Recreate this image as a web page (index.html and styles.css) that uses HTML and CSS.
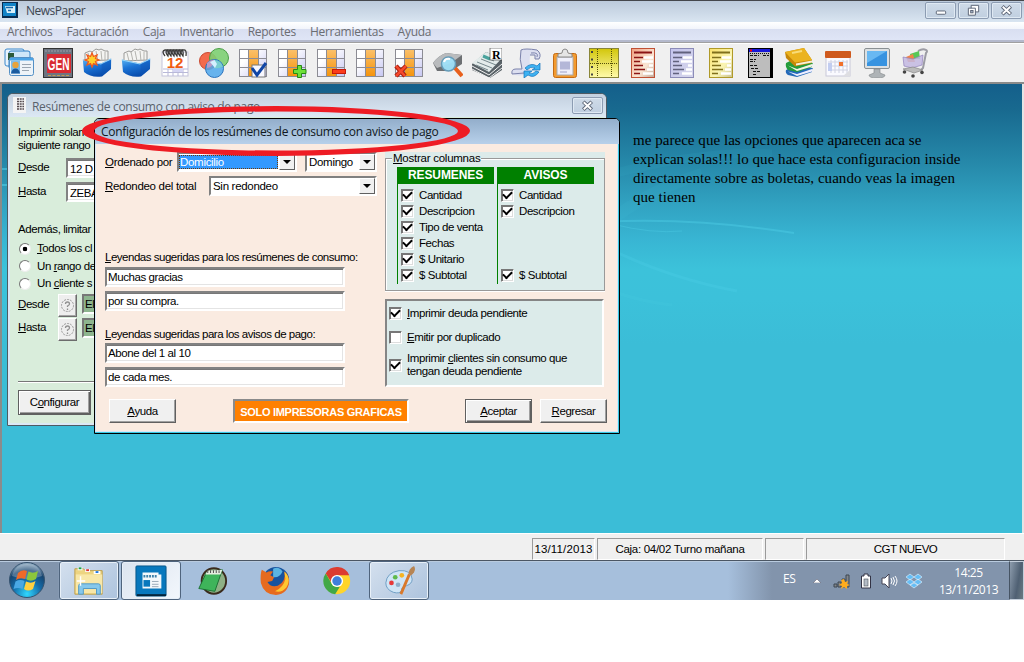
FILE: index.html
```html
<!DOCTYPE html>
<html lang="es">
<head>
<meta charset="utf-8">
<title>NewsPaper</title>
<link rel="stylesheet" href="styles.css">
</head>
<body>
<svg class="defs" width="0" height="0" aria-hidden="true">
  <defs>
    <linearGradient id="blue" x1="0" y1="0" x2=".4" y2="1"><stop offset="0" stop-color="#5fb8f4"/><stop offset=".5" stop-color="#1c74d6"/><stop offset="1" stop-color="#0a4eae"/></linearGradient>
    <linearGradient id="orange" x1="0" y1="0" x2="0" y2="1"><stop offset="0" stop-color="#fbc069"/><stop offset="1" stop-color="#f5940e"/></linearGradient>
    <linearGradient id="lilac" x1="0" y1="0" x2="1" y2="1"><stop offset=".3" stop-color="#fff"/><stop offset="1" stop-color="#c6c6f2"/></linearGradient>
    <linearGradient id="yellow" x1="0" y1="0" x2="0" y2="1"><stop offset="0" stop-color="#d2c60a"/><stop offset="1" stop-color="#fffbaa"/></linearGradient>
    <linearGradient id="docred" x1="0" y1="0" x2="1" y2="1"><stop offset="0" stop-color="#f0a080"/><stop offset=".6" stop-color="#fbe6d4"/><stop offset="1" stop-color="#c0a898"/></linearGradient>
    <linearGradient id="doclilac" x1="0" y1="0" x2="1" y2="1"><stop offset="0" stop-color="#c4c4ee"/><stop offset="1" stop-color="#d6d6ea"/></linearGradient>
    <linearGradient id="docyellow" x1="0" y1="0" x2="1" y2="1"><stop offset="0" stop-color="#fbe26a"/><stop offset=".6" stop-color="#faf5b4"/><stop offset="1" stop-color="#c8c090"/></linearGradient>
    <radialGradient id="orb" cx=".5" cy=".9" r=".9"><stop offset="0" stop-color="#30d8ff"/><stop offset=".45" stop-color="#146ba8"/><stop offset=".75" stop-color="#17446f"/><stop offset="1" stop-color="#9fb8cc"/></radialGradient>
    <symbol id="table" viewBox="0 0 30 30">
      <rect x="1.500" y="1.500" width="27" height="27" fill="url(#lilac)" stroke="#8c8c94"/>
      <rect x="11" y="2" width="9" height="26" fill="url(#orange)"/>
      <path d="M2 10.500H28M2 19.500H28M10.500 2V28M20.500 2V28" stroke="#8c8c94" fill="none"/>
    </symbol>
    <symbol id="filebox" viewBox="0 0 30 30">
      <path d="M3 13V5L8 3 10 4 14 1 17 2 19 1 23 3 26 3V12Z" fill="#f4f4f2" stroke="#9a9a98"/>
      <path d="M6 5 8 13M10 4 12 13M14 3 16 13M19 3 20 13M23 4V12" stroke="#b4b4b0" fill="none"/>
      <path d="M.8 11.500 19 15.500 29.200 10.500 29 21 20 28.500Q9 30 2 24Z" fill="url(#blue)"/>
      <path d="M1 12 19 16 29 11" stroke="#9ad8fb" fill="none"/>
      <path d="M19.500 16 20 28 28.500 21 29 12Z" fill="#0d55b4" opacity=".45"/>
    </symbol>
    <symbol id="doclines" viewBox="0 0 30 30">
      <path d="M6 4.500H24" stroke-width="2" stroke="currentColor"/>
      <path d="M6 9.500H15M6 13.500H12M6 17.500H15M6 21.500H17M6 25.500H12" stroke-width="1.300" stroke="currentColor"/>
      <path d="M16 9.500H25M14 13.500H25M21 17.500H25M19 21.500H25M15 25.500H25" stroke-width="2.400" stroke="#fff"/>
    </symbol>
  </defs>
</svg>

<div class="screen">
  <header class="titlebar">
    <svg class="app-icon" viewBox="0 0 16 16"><rect width="16" height="16" fill="#082c50"/><rect x="1" y="1" width="13" height="13" fill="#1284c8"/><path d="M3 4H13V11H5Z" fill="#d8f0fb"/><path d="M4 5.500H11M6 8.500H9" stroke="#1567a8" stroke-width="1.500"/></svg>
    <span class="titlebar-text">NewsPaper</span>
    <div class="win-buttons">
      <span class="win-btn"><svg viewBox="0 0 30 16"><rect x="10.500" y="8.500" width="10" height="3.500" rx="1" fill="#fff" stroke="#596273"/></svg></span>
      <span class="win-btn"><svg viewBox="0 0 30 16"><path d="M12.500 2.500H20.500V9.500H12.500Z" fill="#fff" stroke="#596273"/><path d="M9.500 5.500H17V13H9.500Z" fill="#fff" stroke="#596273"/><rect x="12" y="8" width="2.500" height="2.500" fill="#aab8cc" stroke="#596273"/></svg></span>
      <span class="win-btn"><svg viewBox="0 0 30 16"><path d="M10.500 3.500 19.500 12M19.500 3.500 10.500 12" stroke="#596273" stroke-width="4"/><path d="M11 4 19 11.500M19 4 11 11.500" stroke="#fff" stroke-width="2"/></svg></span>
    </div>
  </header>

  <nav class="menubar">
    <span>Archivos</span><span>Facturación</span><span>Caja</span><span>Inventario</span><span>Reportes</span><span>Herramientas</span><span>Ayuda</span>
  </nav>

  <div class="toolbar">
    <svg viewBox="0 0 30 30"><rect x="1" y="1" width="19" height="17" rx="2" fill="#e9f3fc" stroke="#3b88cc"/><rect x="5" y="3" width="21" height="18" rx="2" fill="#cfe7f9" stroke="#2d7fc6"/><rect x="4" y="5" width="6" height="7" fill="#2c5a3a"/><rect x="5.500" y="9.500" width="24" height="18" rx="2" fill="#eef3f8" stroke="#5590c5"/><path d="M6 10H29V12.500H6Z" fill="#4aa3e6"/><rect x="7" y="12.500" width="9" height="13" fill="#7fbdec"/><circle cx="11.500" cy="17" r="3.200" fill="#e8a33c"/><path d="M7 25.500Q8 20.500 11.500 20.500T16 25.500Z" fill="#1c5b9e"/><path d="M18 16.500H27M18 19.500H27M18 22.500H25" stroke="#9aa5b1"/></svg>
    <svg viewBox="0 0 30 30"><rect x=".5" y=".5" width="29" height="29" fill="#6e7480" stroke="#333"/><rect x="4" y="6" width="24" height="19" fill="#d92b32"/><path d="M2 3H28" stroke="#9aa0aa" stroke-dasharray="2 1"/><path d="M5 27.500H26" stroke="#c09a50" stroke-dasharray="3 1.500"/><text x="15.500" y="21.500" class="gen" textLength="22" lengthAdjust="spacingAndGlyphs">GEN</text></svg>
    <svg viewBox="0 0 30 30"><use href="#filebox"/><path d="M10 5 11.500 8.500 15 7 13.500 10.500 17 12 13.500 13.500 15 17 11.500 15.500 10 19 8.500 15.500 5 17 6.500 13.500 3 12 6.500 10.500 5 7 8.500 8.500Z" fill="#ffd02c" stroke="#f0581c" stroke-width="1.300"/></svg>
    <svg viewBox="0 0 30 30"><use href="#filebox"/></svg>
    <svg viewBox="0 0 30 30"><rect x="2" y="4" width="26" height="24" fill="#fff" stroke="#c3c3da"/><path d="M3 21H28M3 24.500H28M8 21V28M13 21V28M18 21V28M23 21V28" stroke="#b9b9d8"/><path d="M13 21H23V24H13Z" fill="#d5d5f3"/><path d="M5 8Q1 3 5 2T8 8Q4 3 8 2T11 8Q7 3 11 2T14 8Q10 3 14 2T17 8Q13 3 17 2T20 8Q16 3 20 2T23 8Q19 3 23 2T26 8" stroke="#3c3c3c" fill="none" stroke-width="1.300"/><text x="15" y="20" class="cal">12</text></svg>
    <svg viewBox="0 0 30 30"><circle cx="9" cy="13" r="8.500" fill="#f36a4c" stroke="#c94b33"/><circle cx="20" cy="10" r="9.500" fill="#7dcf72" fill-opacity=".9" stroke="#4a9e47"/><circle cx="15.500" cy="20.500" r="9" fill="#4fa8ec" fill-opacity=".85" stroke="#2c74bd"/><path d="M8 15Q12 11 16 12Q14 19 8 20Z" fill="#b89ac6"/><path d="M15 12Q22 12 24 19Q18 21 15 20Z" fill="#78cdd0"/><path d="M11 14 15.500 12 18 16 16 20Z" fill="#d4f0ff"/></svg>
    <svg viewBox="0 0 30 30"><use href="#table"/><rect x="14" y="17" width="13" height="12" fill="#f8f8ff" stroke="#777"/><path d="M14 20 19 27 28 15" fill="none" stroke="#1045a5" stroke-width="3"/></svg>
    <svg viewBox="0 0 30 30"><use href="#table"/><path d="M20.500 17.500H24.500V21.500H29V25.500H24.500V29.500H20.500V25.500H16.500V21.500H20.500Z" fill="#6ee038" stroke="#258a15"/></svg>
    <svg viewBox="0 0 30 30"><use href="#table"/><rect x="16.500" y="21.500" width="13" height="4" fill="#fb3c1a" stroke="#c41a0c"/></svg>
    <svg viewBox="0 0 30 30"><use href="#table"/></svg>
    <svg viewBox="0 0 30 30"><use href="#table"/><path d="M2 18 11 28M12 18 2 28" stroke="#a81d0c" stroke-width="4.500"/><path d="M2 18 11 28M12 18 2 28" stroke="#f5492c" stroke-width="2.500"/></svg>
    <svg viewBox="0 0 30 30"><path d="M0 15Q5 8 13 5L29 7V16L18 23H4Z" fill="#6d7073"/><path d="M0 15Q5 8 13 5L29 7 18 15 4 20Z" fill="#b9bbbd"/><path d="M22 20 29 28" stroke="#e8601c" stroke-width="4"/><circle cx="15.500" cy="16" r="7" fill="#9fe0f8" fill-opacity=".95" stroke="#659bb8" stroke-width="1.500"/><path d="M11 14Q12 10 17 11" stroke="#fff" stroke-width="2" fill="none"/></svg>
    <svg viewBox="0 0 30 30"><path d="M0 16 14 4 30 10V22L18 30 0 22Z" fill="#596267"/><path d="M0 15 14 4 30 10 17 24Z" fill="#e4eceb"/><path d="M0 18 17 27 30 16M0 21 17 30 30 20" stroke="#f2f2f2" fill="none"/><path d="M5 14 20 20M9 11 24 17M4 17 16 22M13 9 22 13" stroke="#77898d"/><path d="M11 8 18 11" stroke="#49a29c" stroke-width="3"/><rect x="18" y="0" width="12" height="12" fill="#fff" stroke="#333" stroke-width=".6"/><text x="24" y="10.500" class="letter-r">R</text></svg>
    <svg viewBox="0 0 30 30"><path d="M10 2Q14 0 26 2Q31 6 28 11H24V7H19Q18 16 20 23Q10 30 1 26Q0 21 5 21H11Q8 11 10 2Z" fill="#dcdff0"/><path d="M10 2Q14 0 26 2Q31 6 28 11H24V7H19M10 2Q8 11 11 21H5Q0 21 1 26L13 25M20 5Q28 4 26 9" fill="none" stroke="#7b82ab"/><path d="M14 20Q20 14 26 18L29 15V22H21L24 20Q19 18 16 22ZM28 24Q23 31 17 27L13 30V23H21L18 25Q22 27 25 23Z" fill="#3db2f2" stroke="#1374bc" stroke-width=".7"/></svg>
    <svg viewBox="0 0 30 30"><rect x="3.500" y="5.500" width="23" height="24" rx="2" fill="#f39b30" stroke="#c46b14"/><rect x="7" y="9" width="16" height="18" fill="#eff0fb" stroke="#aaa"/><path d="M10 13.500H20V21.500H10Z" fill="#b4b7d8"/><path d="M10 24H17" stroke="#9ea2c8"/><path d="M8 9V6L12 5Q12 1 15 1T18 5L22 6V9Z" fill="#e5e5e5" stroke="#8a8a8a"/></svg>
    <svg viewBox="0 0 30 30"><rect x=".5" y=".5" width="29" height="29" fill="url(#yellow)" stroke="#8a8638"/><path d="M8.500 1V29M22.500 1V29M1 15.500H29" stroke="#544f08" stroke-dasharray="1 1"/><path d="M3 3V28" stroke="#444" stroke-width="2" stroke-dasharray="2 5.500"/></svg>
    <svg class="ink-red" viewBox="0 0 30 30"><rect x="3.500" y=".5" width="23" height="29" fill="url(#docred)" stroke="#c05034"/><use href="#doclines"/></svg>
    <svg class="ink-lilac" viewBox="0 0 30 30"><rect x="3.500" y=".5" width="23" height="29" fill="url(#doclilac)" stroke="#8c8cb8"/><use href="#doclines"/></svg>
    <svg class="ink-yellow" viewBox="0 0 30 30"><rect x="3.500" y=".5" width="23" height="29" fill="url(#docyellow)" stroke="#b09a28"/><use href="#doclines"/></svg>
    <svg viewBox="0 0 30 30"><rect x="3" y="0" width="25" height="30" fill="#000"/><rect x="4" y="4" width="21" height="25" fill="#bdbdbd"/><rect x="4" y="1" width="21" height="3" fill="#1717d8"/><path d="M5 2.500H7" stroke="#f00" stroke-width="2"/><path d="M5 5.500H24" stroke="#111" stroke-dasharray="1 1"/><path d="M5 7.500H14M18 7.500H24M5 11.500H11M5 13.500H10M5 17.500H12M6 20.500H14M8 23.500H16M8 26.500H12" stroke="#111" stroke-dasharray="3 1"/></svg>
    <svg viewBox="0 0 30 30"><path d="M2 22 8 19 29 20Q27 22 28 24L13 29 4 27Q1 25 2 22Z" fill="#2369b8"/><path d="M4 23.500 13 26 28 21V23.500L13 28Z" fill="#eef"/><path d="M2 15 8 12 29 15Q27 17 28 19L13 24 4 22Q1 19 2 15Z" fill="#239c3b"/><path d="M4 17.500 13 21 28 16V18.500L13 23Z" fill="#f2f2e4"/><path d="M1 4 20 0 28 12V15L11 18.500 2 10Z" fill="#c68708"/><path d="M1 4 20 0 28 12 11 14.500Z" fill="#ebb31f"/><path d="M8 5 18 3" stroke="#f9dc78" stroke-width="2"/><path d="M12 15.500 28 12.500V14.500L12 17.500Z" fill="#f5f0da"/></svg>
    <svg viewBox="0 0 30 30"><rect x="3" y="8" width="24" height="20" fill="#fafaff" stroke="#c8c8d8"/><rect x="2" y="3" width="26" height="7" rx="1" fill="#cf5a1e"/><path d="M5 14H25M5 18H25M5 22H25M8 12V25M12 12V25M16 12V25M20 12V25M24 12V25" stroke="#d0d2e2"/><rect x="5" y="15" width="4" height="8" fill="#c2cdf0"/><rect x="16" y="14" width="4" height="4" fill="#f1702b"/><path d="M20 28 27 22V28Z" fill="#dedee2"/></svg>
    <svg viewBox="0 0 30 30"><rect x="2.500" y=".5" width="25" height="20" rx="1.500" fill="#dce0e2" stroke="#8a9093"/><rect x="5" y="3" width="20" height="15" fill="#3793e0"/><path d="M5 3H25L5 15Z" fill="#68b8f2"/><path d="M12 21H18V25L23 27Q23 30 15 30T7 27L12 25Z" fill="#aeb3b6" stroke="#7f8587" stroke-width=".6"/></svg>
    <svg viewBox="0 0 30 30"><path d="M17 3Q22 0 25 2 27 3 25 5L22 20 19 23" fill="none" stroke="#9c9ca4" stroke-width="2"/><path d="M9 6 18 3 19 11H10Z" fill="#57c857"/><path d="M5 9 12 6 14 14H7Z" fill="#f18448"/><path d="M2 9 12 11 22 7 21 17 11 20 3 18Z" fill="#c3b8e2" fill-opacity=".85" stroke="#9283bd" stroke-width=".7"/><path d="M2 21 12 19 22 22 13 25Z" fill="#bbb" stroke="#888" stroke-width=".7"/><circle cx="3.500" cy="24" r="1.800" fill="#444"/><circle cx="12" cy="28" r="1.800" fill="#444"/><circle cx="21" cy="24.500" r="1.800" fill="#444"/></svg>
  </div>

  <main class="desktop">
    <svg class="streaks" viewBox="0 0 1020 449"><g fill="none" stroke="#55d8ee"><path d="M600 138Q690 133 792 149" stroke-width="2" opacity=".35"/><path d="M610 140Q650 150 680 147" opacity=".3"/><path d="M610 166Q670 195 735 207" stroke-width="3" opacity=".2"/><path d="M610 90Q700 66 770 70" stroke-width="9" opacity=".06"/><path d="M612 134Q650 105 700 90" stroke-width="12" opacity=".06"/><path d="M610 207Q640 218 670 221" stroke-width="3" opacity=".1"/><path d="M0 85H6M0 101H6" stroke-width="2" opacity=".5"/></g></svg>

    <p class="note">me parece que las opciones que aparecen aca se<br>explican solas!!! lo que hace esta configuracion inside<br>directamente sobre as boletas, cuando veas la imagen<br>que tienen</p>

    <section class="window back-window">
      <div class="window-title">
        <svg class="doc-icon" viewBox="0 0 14 16"><rect width="13" height="16" fill="#f4f4f4"/><path d="M4 2H11M4 4.500H11M4 7H11M4 9.500H11M4 12H11" stroke="#554b50" stroke-width="1.400" stroke-dasharray="2 .7"/></svg>
        <span>Resúmenes de consumo con aviso de pago</span>
        <span class="win-btn small"><svg viewBox="0 0 30 16"><path d="M10.500 4 19.500 12.500M19.500 4 10.500 12.500" stroke="#596273" stroke-width="4"/><path d="M11 4.500 19 12M19 4.500 11 12" stroke="#fff" stroke-width="2"/></svg></span>
      </div>
      <div class="back-body">
        <p class="intro">Imprimir solam<br>siguiente rango</p>
        <div class="range"><label><u>D</u>esde</label><span class="field">12 D</span></div>
        <div class="range"><label><u>H</u>asta</label><span class="field">ZEBA</span></div>
        <p class="limit">Además, limitar l</p>
        <div class="radio"><i class="dot on"></i><span><u>T</u>odos los cl</span></div>
        <div class="radio"><i class="dot"></i><span>Un <u>r</u>ango de</span></div>
        <div class="radio"><i class="dot"></i><span>Un <u>c</u>liente s</span></div>
        <div class="pick"><label><u>D</u>esde</label><span class="help"><svg viewBox="0 0 15 15"><circle cx="7.500" cy="7.500" r="6" fill="none" stroke="#999" stroke-dasharray="2 1"/><path d="M5.500 6Q5.500 4 7.500 4T9.500 6Q9.500 7 7.500 8V9M7.500 10.500V12" fill="none" stroke="#909090" stroke-width="1.300"/></svg></span><span class="green-field">El</span></div>
        <div class="pick"><label><u>H</u>asta</label><span class="help"><svg viewBox="0 0 15 15"><circle cx="7.500" cy="7.500" r="6" fill="none" stroke="#999" stroke-dasharray="2 1"/><path d="M5.500 6Q5.500 4 7.500 4T9.500 6Q9.500 7 7.500 8V9M7.500 10.500V12" fill="none" stroke="#909090" stroke-width="1.300"/></svg></span><span class="green-field">El</span></div>
        <div class="divider"></div>
        <span class="button default configure">C<u>o</u>nfigurar</span>
      </div>
    </section>

    <section class="window front-window">
      <div class="window-title"><span>Configuración de los resúmenes de consumo con aviso de pago</span></div>
      <div class="front-body">
        <div class="columns">
          <div class="left-col">
            <div class="order-row"><label><u>O</u>rdenado por</label>
              <span class="select order"><span class="selected">Domicilio</span><i class="arrow"></i></span>
              <span class="select day"><span>Domingo</span><i class="arrow"></i></span></div>
            <div class="round-row"><label><u>R</u>edondeo del total</label><span class="select round"><span>Sin redondeo</span><i class="arrow"></i></span></div>
            <p class="legend"><u>L</u>eyendas sugeridas para los resúmenes de consumo:</p>
            <span class="field">Muchas gracias</span>
            <span class="field">por su compra.</span>
            <p class="legend second"><u>L</u>eyendas sugeridas para los avisos de pago:</p>
            <span class="field">Abone del 1 al 10</span>
            <span class="field">de cada mes.</span>
          </div>
          <div class="right-col">
            <div class="group">
              <div class="group-title"><span><u>M</u>ostrar columnas</span></div>
              <div class="lists">
                <div class="list"><h3>RESUMENES</h3>
                  <div class="check"><i class="box on"></i>Cantidad</div>
                  <div class="check"><i class="box on"></i>Descripcion</div>
                  <div class="check"><i class="box on"></i>Tipo de venta</div>
                  <div class="check"><i class="box on"></i>Fechas</div>
                  <div class="check"><i class="box on"></i>$ Unitario</div>
                  <div class="check"><i class="box on"></i>$ Subtotal</div>
                </div>
                <div class="list"><h3>AVISOS</h3>
                  <div class="check"><i class="box on"></i>Cantidad</div>
                  <div class="check"><i class="box on"></i>Descripcion</div>
                  <div class="check last"><i class="box on"></i>$ Subtotal</div>
                </div>
              </div>
            </div>
            <div class="options">
              <div class="check"><i class="box on"></i><span><u>I</u>mprimir deuda pendiente</span></div>
              <div class="check"><i class="box"></i><span><u>E</u>mitir por duplicado</span></div>
              <div class="check tall"><i class="box on"></i><span>Imprimir <u>c</u>lientes sin consumo que<br>tengan deuda pendiente</span></div>
            </div>
          </div>
        </div>
        <div class="actions">
          <span class="button"><u>A</u>yuda</span>
          <span class="banner">SOLO IMPRESORAS GRAFICAS</span>
          <span class="button default"><u>A</u>ceptar</span>
          <span class="button"><u>R</u>egresar</span>
        </div>
      </div>
    </section>

    <svg class="marker" viewBox="0 0 388 50"><path fill="#ee1c24" fill-rule="evenodd" d="M0 25A194 25 0 0 1 388 25A194 25 0 0 1 0 25ZM12 25A182 19.500 0 0 0 376 25A182 19.500 0 0 0 12 25Z"/></svg>
  </main>

  <div class="statusbar">
    <span class="cell date">13/11/2013</span><span class="cell turn">Caja: 04/02 Turno mañana</span><span class="cell blank"></span><span class="cell user">CGT NUEVO</span>
  </div>

  <footer class="taskbar">
    <svg class="start" viewBox="0 0 38 38"><circle cx="19" cy="19" r="17.500" fill="url(#orb)" stroke="#36536f"/><path d="M4 15Q7 3 19 3T34 15Q19 21 4 15Z" fill="#fff" opacity=".25"/><path d="M10 12Q14 8 19 10L17 18Q12 16 8 19Z" fill="#f06a28"/><path d="M20.500 10.500Q25 13 30 10L28 18Q23 21 18.500 18.500Z" fill="#8cc63c"/><path d="M7.500 20.500Q12 18 16.500 20L14.500 28Q10 26 5.500 28Z" fill="#4aa8e4"/><path d="M18 20.500Q23 23 27.500 20L25 28Q20 31 16 28Z" fill="#ffd040"/></svg>
    <span class="task running explorer"><svg viewBox="0 0 34 34"><path d="M2 4H11L13 6H31V31H2Z" fill="#edd481" stroke="#bd9d48"/><path d="M5 4H10M13 6H18M22 8H29" stroke="#fff" stroke-width="3"/><path d="M6 3.500H9" stroke="#19a04a" stroke-width="2"/><path d="M14 5.500H17" stroke="#d33" stroke-width="2"/><path d="M24 7.500H27" stroke="#27d" stroke-width="2"/><path d="M3 10H31V30H3Z" fill="#f8e7a8"/><path d="M6 22Q6 20 8 20H27Q29 20 29 22V31H25V25H11V31H6Z" fill="#86c8ec" stroke="#4f98c5"/><path d="M8 12V22M4 17H13" stroke="#fff" stroke-width="1.500"/></svg></span>
    <span class="task running active news"><svg viewBox="0 0 34 34"><rect x="1" y="1" width="32" height="32" rx="1" fill="#0878bd" stroke="#075587"/><path d="M2 32H33" stroke="#04243a" stroke-width="2"/><path d="M8 8H25V10H28V25H8Z" fill="#f4f8fb"/><path d="M9 12H24" stroke="#3f82aa" stroke-width="2.500" stroke-dasharray="2 1"/><rect x="9" y="16" width="7" height="7" fill="#0878bd"/><path d="M18 17.500H25M18 20.500H25M18 23H25" stroke="#96a7b5"/></svg></span>
    <span class="task pad"><svg viewBox="0 0 34 34"><ellipse cx="19" cy="17" rx="13" ry="13.500" fill="#8eb085" stroke="#3a2a1c" stroke-width="2"/><path d="M11 8 28 5 20 28 3 25Z" fill="#3eb45a" stroke="#1a6f33"/><path d="M12 6 28 5 26 10 10 10Z" fill="#e5eee0"/><path d="M12 7H27" stroke="#444" stroke-width="3" stroke-dasharray="1 2"/></svg></span>
    <span class="task fox"><svg viewBox="0 0 34 34"><circle cx="18" cy="16" r="14" fill="#17529e"/><path d="M15 4Q21 1 25 7Q22 14 15 13Z" fill="#5bb4e2"/><path d="M3 5 8 8Q11 6 15 7L12 11 16 13 14 17 9 18Q12 24 20 22Q29 18 27 7Q32 11 32 18Q31 30 18 32Q5 31 2 19Q1 10 3 5Z" fill="#e66b1f"/><path d="M27 7Q35 15 29 24Q24 30 17 28Q26 24 28 15Z" fill="#ffc831"/></svg></span>
    <span class="task chrome"><svg viewBox="0 0 34 34"><circle cx="17" cy="17" r="14" fill="#ffd52a"/><path d="M5 9A14 14 0 0 1 30 11H17Q9 13 12 20Z" fill="#dc3c30"/><path d="M5 9 12 21Q15 24 20 23L15 31A14 14 0 0 1 5 9Z" fill="#41a847"/><circle cx="17" cy="17" r="6.500" fill="#fff"/><circle cx="17" cy="17" r="5" fill="#3f7fdb"/></svg></span>
    <span class="task running paint"><svg viewBox="0 0 34 34"><path d="M3 19Q4 8 17 6Q30 5 31 15Q31 20 25 22Q19 23 20 27Q18 31 11 29Q3 26 3 19Z" fill="#cfe5f6" stroke="#6b9bc1"/><circle cx="9" cy="19" r="2.500" fill="#e63a3a"/><circle cx="13" cy="13" r="2.500" fill="#5fba4c"/><circle cx="20" cy="11" r="2.500" fill="#f5b321"/><circle cx="16" cy="21" r="2.500" fill="#8db0cc"/><path d="M19 31 28 10" stroke="#d9792c" stroke-width="3"/><path d="M27 10Q27 4 33 1Q36 6 30 11Z" fill="#b78554"/></svg></span>
    <div class="tray">
      <span class="lang">ES</span>
      <svg class="up" viewBox="0 0 8 4"><path d="M0 4 4 0 8 4Z" fill="#fff" stroke="#556" stroke-width=".5"/></svg>
      <svg class="signal" viewBox="0 0 18 16"><path d="M1 11H4V14H1ZM5 9H8V14H5ZM9 6H12V14H9ZM13 2H16V14H13Z" fill="#83878c" stroke="#3d4650"/><path d="M11 6 12 9 15 8 14 11 17 12 14 13 14 16 11 14 8 16 9 13 6 12 9 10 8 7Z" fill="#ffac1c"/></svg>
      <svg class="battery" viewBox="0 0 12 16"><path d="M4 1H8V3H10.500V15H1.500V3H4Z" fill="#fff" stroke="#334"/><rect x="4" y="6" width="4" height="7" fill="#b4bcc6" stroke="#4d545c" stroke-width=".6"/></svg>
      <svg class="sound" viewBox="0 0 17 16"><path d="M1 5H4L8 1V15L4 11H1Z" fill="#fff" stroke="#445"/><path d="M10 5Q12 8 10 11M12 4Q15 8 12 12M14 3Q18 8 14 13" fill="none" stroke="#fff"/></svg>
      <svg class="dropbox" viewBox="0 0 18 16"><path d="M5 1 9 4 5 7 1 4ZM13 1 17 4 13 7 9 4ZM5 6 9 9 5 12 1 9ZM13 6 17 9 13 12 9 9ZM5 12 9 10 13 12 9 15Z" fill="#65bdf5" stroke="#d5edfc" stroke-width=".7"/></svg>
      <span class="clock">14:25<br>13/11/2013</span>
      <span class="peek"></span>
    </div>
  </footer>
</div>
</body>
</html>
```

FILE: styles.css
```css
* { box-sizing: border-box; }
body { margin: 0; background: #fff; color: #000; font: 11.5px/13px "Liberation Sans", Arial, sans-serif; letter-spacing: -.42px; }
p, h3 { margin: 0; }
i { font-style: normal; }
svg { display: block; flex: none; }
u { text-underline-offset: 1px; text-decoration-thickness: 1px; }
.defs { position: absolute; }
.screen { width: 1024px; height: 600px; display: flex; flex-direction: column; overflow: hidden; }

.titlebar { height: 22px; flex: none; display: flex; padding-left: 2px; border-top: 1px solid #45474c; background: linear-gradient(#bccadb, #d9e5f1); font: 12px/20px "Open Sans", "Noto Sans", sans-serif; color: #3d4650; letter-spacing: -.5px; }
.app-icon { width: 16px; height: 16px; margin-top: 1px; }
.titlebar-text { margin-left: 8px; flex: 1; }
.win-buttons { display: flex; gap: 2px; padding: 1px 2px 0 0; }
.win-btn { width: 31px; height: 17px; border: 1px solid #8c9cb2; border-radius: 2px; background: linear-gradient(#cfdbe8, #c0cfe0); box-shadow: inset 0 0 0 1px #dfe9f3; }
.win-btn svg { width: 29px; height: 15px; }

.menubar { height: 20px; flex: none; display: flex; gap: 14px; padding-left: 7px; background: linear-gradient(#fff 0, #f2f5fb 7px, #d9dff1 7px, #dfe5f6 18px, #b4b9cc 18px); font: 12px/20px "Open Sans", "Noto Sans", sans-serif; color: #6b6d72; letter-spacing: -.27px; }
.toolbar { height: 42px; flex: none; display: flex; gap: 9px; padding: 5px 0 0 4px; background: #f0f0f0; border-top: 1px solid #a0a0a0; border-bottom: 2px solid #8a8a8a; box-shadow: inset 0 1px #fff; }
.toolbar svg { width: 30px; height: 30px; }
.gen { font: bold 17px "Liberation Sans", sans-serif; fill: #fff; text-anchor: middle; letter-spacing: 0; }
.cal { font: bold 15px "Liberation Sans", sans-serif; fill: #f05a12; text-anchor: middle; letter-spacing: 0; }
.letter-r { font: bold 12px "Liberation Serif", serif; text-anchor: middle; }
.ink-red { color: #8c1414; }
.ink-lilac { color: #62627e; }
.ink-yellow { color: #80701c; }

.desktop { height: 449px; flex: none; position: relative; border-left: 2px solid #8b8b8b; border-right: 2px solid #e4e4e4; background: linear-gradient(#145f8b 0, #18698f 25px, #2587a8 76px, #31a2c1 120px, #38b5d3 155px, #3cc2da 185px, #3cc1da 215px, #3bbdd7 260px); }
.streaks { width: 1020px; height: 449px; }
.note { position: absolute; left: 631px; top: 47px; font: 15px/19px "Liberation Serif", "Times New Roman", serif; letter-spacing: .04px; white-space: nowrap; }

.window { position: absolute; display: flex; flex-direction: column; overflow: hidden; white-space: nowrap; }
.window-title { display: flex; flex: none; font: 12px/25px "Open Sans", "Noto Sans", sans-serif; letter-spacing: -.59px; }
.back-window { left: 5px; top: 9px; width: 600px; height: 333px; border: 1px solid #4e5a63; border-radius: 6px 6px 0 0; background: #dbe9f5; padding: 0 2px 2px; }
.back-window .window-title { height: 23px; margin: 0 -2px; padding: 0 3px 0 5px; background: linear-gradient(#c3d0df, #dce8f4); color: #59626c; letter-spacing: -.32px; }
.front-window .window-title { letter-spacing: -.3px; }
.doc-icon { width: 14px; height: 16px; margin: 3px 5px 0 0; }
.win-btn.small { margin: 3px 0 0 auto; height: 17px; width: 31px; }
.back-body { flex: 1; background: #d9eddb; padding: 8px 0 0 8px; display: flex; flex-direction: column; }
.intro { height: 33px; padding-top: 1px; line-height: 13px; }
.range { display: flex; height: 24px; }
.range label { width: 48px; padding-top: 3px; }
.field { display: block; background: #fff; border: 2px solid; border-color: #828282 #fff #fff #828282; box-shadow: inset 0 1px #777, inset -1px -1px #e4e4e4; height: 20px; line-height: 16px; padding-left: 1px; }
.range .field { width: 200px; line-height: 18px; padding-left: 2px; }
.limit { height: 17px; margin-top: 17px; }
.radio { height: 17.500px; display: flex; align-items: center; gap: 6px; padding-left: 1px; }
.dot { width: 12px; height: 12px; border-radius: 50%; border: 1px solid #777; border-right-color: #eee; border-bottom-color: #eee; background: #fff; }
.dot.on { background: radial-gradient(circle, #000 2px, #fff 2.600px); }
.pick { display: flex; height: 24px; margin-top: 1px; }
.pick + .pick { margin-top: 0; }
.pick label { width: 40px; padding-top: 4px; }
.pick + .pick label { padding-top: 3px; }
.help { width: 19px; height: 23px; background: #eee; border: 1px solid; border-color: #fff #6c6c6c #6c6c6c #fff; box-shadow: inset -1px -1px #a5a5a5; padding: 3px 0 0 1px; }
.help svg { width: 15px; height: 15px; }
.green-field { margin-left: 5px; width: 200px; height: 20px; background: #8db58e; border: 2px solid #777; border-bottom-color: #fff; line-height: 16px; padding-left: 1px; }
.divider { margin-top: 39px; border-top: 1px solid #777; border-bottom: 1px solid #fff; height: 2px; flex: none; }
.button { height: 24px; width: 67px; flex: none; background: #f0f0f0; border: 1px solid; border-color: #fff #606060 #606060 #fff; box-shadow: inset -1px -1px #a0a0a0; text-align: center; line-height: 23px; }
.button.default { border-color: #606060; box-shadow: inset 1px 1px #fff, inset -1px -1px #606060, inset -2px -2px #a0a0a0; }
.configure { width: 73px; height: 25px; margin-top: 7px; }

.front-window { left: 92px; top: 34px; width: 526px; height: 316px; border: 1px solid #000; border-radius: 5px 5px 0 0; background: #d7e7f7; padding: 0 2px 2px 1px; box-shadow: inset -1px -1px #38c9e4; }
.front-window .window-title { height: 25px; margin: 0 -2px 0 -1px; padding-left: 6px; background: linear-gradient(#93aecb, #b7d0ea); line-height: 26px; color: #101820; }
.front-body { flex: 1; background: #faebe1; padding: 8px 12px 0 9px; display: flex; flex-direction: column; }
.columns { display: flex; height: 247px; flex: none; }
.left-col { width: 280px; flex: none; }
.left-col > .field { width: 240px; margin-bottom: 4px; }
.order-row, .round-row { display: flex; height: 24px; }
.order-row label, .round-row label { padding-top: 4px; letter-spacing: -.3px; }
.order-row label { width: 72px; }
.round-row label { width: 104px; }
.select { display: flex; height: 20px; background: #fff; border: 2px solid; border-color: #808080 #fff #fff #808080; line-height: 17px; letter-spacing: -.3px; }
.select > span { flex: 1; padding-left: 2px; }
.select .selected { background: #3399ff; color: #fff; outline: 1px dotted #6b3908; outline-offset: -1px; margin: 1px 1px 1px 0; line-height: 14px; padding-left: 1px; }
.order { width: 120px; margin-right: 8px; }
.day { width: 72px; }
.round { width: 168px; }
.arrow { width: 16px; height: 16px; background: #f0f0f0; border: 1px solid; border-color: #fff #606060 #606060 #fff; display: grid; place-items: center; }
.arrow::before { content: ""; border: 4px solid transparent; border-top: 4px solid #000; border-bottom: 0; }
.legend { height: 16px; margin-top: 51px; letter-spacing: -.48px; }
.legend.second { margin-top: 17px; height: 15px; }
.right-col { width: 220px; flex: none; }
.group { height: 140px; background: #dcebea; padding: 0 11px 0 12px; position: relative; }
.group::before { content: ""; position: absolute; inset: 6px 0 1px 0; border: 1px solid #999; box-shadow: inset 1px 1px #fff, 0 1px #fff; }
.group-title { position: relative; height: 15px; margin-left: -5px; letter-spacing: -.25px; }
.group-title span { background: #dcebea; padding: 0 1px; }
.lists { position: relative; display: flex; gap: 3px; }
.list { width: 97px; height: 117px; border-left: 1px solid #008000; padding-left: 3px; }
.list h3 { margin: 0 0 3px -4px; height: 17px; background: #008000; color: #fff; font: bold 12px/17px "Liberation Sans", sans-serif; text-align: center; letter-spacing: -.1px; }
.list .check { height: 16px; }
.list .check.last { margin-top: 48px; }
.check { display: flex; align-items: center; gap: 5px; }
.box { width: 13px; height: 13px; flex: none; background: #fff; border: 1px solid; border-color: #777 #fff #fff #777; box-shadow: inset 1px 1px #777, inset -1px -1px #ddd; display: grid; place-items: center; }
.box.on::before { content: ""; width: 7px; height: 4px; border-left: 2px solid #000; border-bottom: 2px solid #000; transform: translateY(-1px) rotate(-45deg); }
.options { margin-top: 7px; width: 219px; height: 88px; background: #dcebea; border: 2px solid; border-color: #858585 #fff #fff #858585; padding: 0 0 0 2px; }
.options .check { height: 24px; gap: 5px; }
.options .check.tall { height: 32px; line-height: 13px; }
.actions { display: flex; padding-left: 4px; }
.banner { width: 176px; height: 24px; flex: none; margin: 0 56px 0 57px; background: #ff8000; border: 2px solid; border-color: #8a8a8a #fff #fff #8a8a8a; color: #fff; font: bold 11px/22px "Liberation Sans", sans-serif; text-align: center; letter-spacing: -.3px; }
.actions .button + .button { margin-left: 8px; }
.marker { position: absolute; left: 80px; top: 22px; width: 388px; height: 50px; }

.statusbar { height: 27px; flex: none; display: flex; gap: 2px; padding: 4px 0 0 532px; background: #f0f0f0; border-top: 1px solid #fff; letter-spacing: -.3px; }
.cell { height: 22px; border: 1px solid; border-color: #9a9a9a #fff #fff #9a9a9a; text-align: center; line-height: 21px; }
.date { width: 63px; letter-spacing: .15px; }
.turn { width: 166px; }
.blank { width: 39px; }
.user { width: 199px; letter-spacing: -.5px; }

.taskbar { height: 40px; flex: none; display: flex; border-top: 1px solid #4b5664; background: linear-gradient(90deg, #8295ad 0, #8295ad 58px, #a6bfdc 62px, #a6bfdc 728px, #8294ac 772px); box-shadow: inset 0 1px #b9cbdf; }
.start { width: 38px; height: 38px; margin-left: 8px; }
.task { width: 60px; height: 39px; display: grid; place-items: center; }
.task svg { width: 32px; height: 32px; }
.running { border: 1px solid #4f647d; border-radius: 3px; background: linear-gradient(135deg, #d4e0ee, #adc3dd); box-shadow: inset 0 0 0 1px #e8f0f8; }
.active { background: linear-gradient(135deg, #dbe4ef, #f3f7fc); }
.explorer { margin-left: 13px; }
.news { margin-left: 2px; }
.pad { margin-left: 1px; }
.fox { margin-left: 3px; }
.chrome { margin-left: 2px; }
.paint { margin-left: 2px; }
.tray { margin-left: auto; width: 241px; display: flex; align-items: center; color: #fff; font: 12px/17px "Open Sans", "Noto Sans", sans-serif; letter-spacing: -.45px; }
.lang { width: 30px; padding-bottom: 5px; }
.up { width: 8px; height: 4px; }
.signal { width: 18px; height: 16px; margin-left: 12px; }
.battery { width: 12px; height: 16px; margin-left: 9px; }
.sound { width: 17px; height: 16px; margin-left: 9px; }
.dropbox { width: 18px; height: 16px; margin-left: 7px; }
.clock { flex: 1; padding-left: 5px; text-align: center; }
.peek { width: 15px; height: 39px; border: 1px solid #c3cedb; border-left-color: #465464; background: linear-gradient(100deg, #8d9cad, #4f6073 60%, #7888 100%), #5a6a7c; }
```
